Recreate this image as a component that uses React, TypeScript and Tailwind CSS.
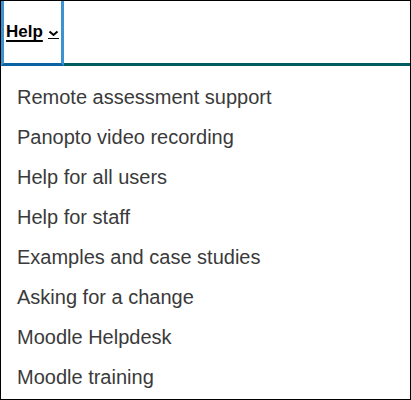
const items = [
  "Remote assessment support",
  "Panopto video recording",
  "Help for all users",
  "Help for staff",
  "Examples and case studies",
  "Asking for a change",
  "Moodle Helpdesk",
  "Moodle training",
];

export default function App() {
  return (
    <div
      className="w-[411px] h-[400px] bg-white border border-black flex flex-col overflow-hidden"
      style={{ fontFamily: '"Liberation Sans", Arial, sans-serif' }}
    >
      {/* nav bar */}
      <div className="h-[65px] flex border-b-[3px] border-[#005c63] shrink-0">
        <button className="relative h-[65px] -mb-[3px] w-[63px] flex items-center pl-[2px] border-x-[3px] border-[#3d92d0] border-b-[3px] border-b-[#0b63a3] text-black">
          <span className="text-[17px] font-bold underline underline-offset-[3px] decoration-[1.5px]">Help</span>
          <span className="ml-[5px] mt-[4px] border-b-[1.5px] border-black pb-[1px] flex">
            <svg width="11" height="7" viewBox="0 0 11 7">
              <path d="M1.5 1.5 L5.5 5 L9.5 1.5" fill="none" stroke="black" strokeWidth="2" />
            </svg>
          </span>
        </button>
        <div className="flex-1" />
      </div>

      {/* dropdown */}
      <ul className="pt-[11px] flex flex-col">
        {items.map((item) => (
          <li key={item} className="h-[40px] flex items-center pl-[16px] text-[20px] text-[#3a3a3a]">
            {item}
          </li>
        ))}
      </ul>
    </div>
  );
}
